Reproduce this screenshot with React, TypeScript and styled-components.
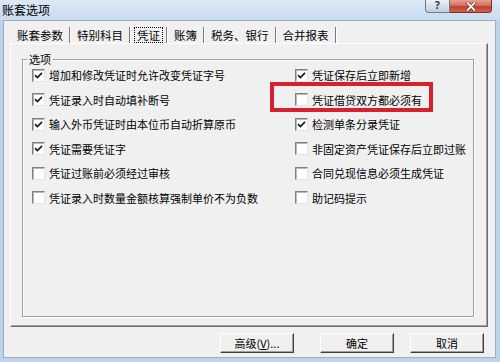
import React from 'react';
import styled, { createGlobalStyle } from 'styled-components';

interface OptionItem {
  label: string;
  checked: boolean;
  highlighted?: boolean;
}

const tabs = ['账套参数', '特别科目', '凭证', '账簿', '税务、银行', '合并报表'];
const activeTab = 2;

// row by row: left column, right column
const optionRows: [OptionItem, OptionItem][] = [
  [
    { label: '增加和修改凭证时允许改变凭证字号', checked: true },
    { label: '凭证保存后立即新增', checked: true },
  ],
  [
    { label: '凭证录入时自动填补断号', checked: true },
    { label: '凭证借贷双方都必须有', checked: false, highlighted: true },
  ],
  [
    { label: '输入外币凭证时由本位币自动折算原币', checked: true },
    { label: '检测单条分录凭证', checked: true },
  ],
  [
    { label: '凭证需要凭证字', checked: true },
    { label: '非固定资产凭证保存后立即过账', checked: false },
  ],
  [
    { label: '凭证过账前必须经过审核', checked: false },
    { label: '合同兑现信息必须生成凭证', checked: false },
  ],
  [
    { label: '凭证录入时数量金额核算强制单价不为负数', checked: false },
    { label: '助记码提示', checked: false },
  ],
];

const GlobalStyle = createGlobalStyle`
  html, body {
    margin: 0;
    padding: 0;
  }
  body {
    width: 500px;
    height: 362px;
    overflow: hidden;
    background: #bcd3eb;
    font-family: "Noto Sans CJK SC", "Noto Sans", "Liberation Sans", sans-serif;
    color: #000;
  }
`;

const Window = styled.div`
  width: 500px;
  height: 362px;
  display: flex;
  flex-direction: column;
  background: #bcd3eb;
  box-sizing: border-box;
`;

const TitleBar = styled.div`
  height: 20px;
  flex: none;
  display: flex;
  align-items: flex-start;
  padding-left: 2px;
  background: linear-gradient(#dce8f5, #c9dbef);
`;

const Title = styled.div`
  font-size: 12px;
  line-height: 20px;
`;

const CaptionButtons = styled.div`
  margin-left: auto;
  margin-right: 8px;
  display: flex;
`;

const CaptionButton = styled.div<{ $close?: boolean }>`
  width: ${p => (p.$close ? 42 : 25)}px;
  height: 13px;
  box-sizing: border-box;
  display: flex;
  align-items: center;
  justify-content: center;
  border: 1px solid ${p => (p.$close ? '#7d2f25' : '#6c7d92')};
  border-top: none;
  border-left-width: ${p => (p.$close ? 0 : 1)}px;
  border-radius: ${p => (p.$close ? '0 0 4px 0' : '0 0 0 4px')};
  background: ${p =>
    p.$close
      ? 'linear-gradient(#e6a193, #d5705f 45%, #c43f2c 55%, #d0624f)'
      : 'linear-gradient(#eef2f7, #d7dfe9 50%, #c3cedb)'};
  font-family: "DejaVu Sans", sans-serif;
  font-weight: bold;
  font-size: 10px;
  line-height: 12px;
  color: #3d4a5c;
`;

const Client = styled.div`
  flex: 1;
  margin: 0 4px 4px 3px;
  border: 1px solid #9aafc6;
  background: #f0f0f0;
  display: flex;
  flex-direction: column;
  padding: 0 7px 0 6px;
  min-height: 0;
`;

const TabStrip = styled.div`
  height: 22px;
  flex: none;
  display: flex;
  align-items: flex-end;
  padding-left: 1px;
`;

const Tab = styled.div<{ $active?: boolean }>`
  height: 16px;
  display: flex;
  align-items: stretch;
  padding: 0 ${p => (p.$active ? 3 : 6)}px;
  margin-right: 1px;
  border-right: 1px solid #7a7a7a;
  box-shadow: 1px 0 0 #ffffff;
  font-size: 11.5px;
  line-height: 16px;
  white-space: nowrap;
`;

const FocusBox = styled.span`
  display: flex;
  align-items: center;
  padding: 0 2px;
  border: 1px dotted #000;
  box-sizing: border-box;
`;

const TabPage = styled.div`
  height: 284px;
  flex: none;
  box-sizing: border-box;
  display: flex;
  padding: 9px 13px 9px 11px;
  border-top: 1px solid #ffffff;
  border-left: 1px solid #ffffff;
  border-right: 1px solid #6b6b6b;
  border-bottom: 1px solid #6b6b6b;
  box-shadow: inset -1px -1px 0 #a0a0a0;
`;

const GroupBox = styled.fieldset`
  flex: 1;
  margin: 0;
  padding: 0 0 0 9px;
  min-width: 0;
  border: 1px solid #a0a0a0;
  box-shadow: 1px 1px 0 #ffffff, inset 1px 1px 0 #ffffff;
`;

const GroupLegend = styled.legend`
  font-size: 11px;
  line-height: 13px;
  padding: 0 2px;
  margin-left: -5px;
  background: #f0f0f0;
`;

const OptionGrid = styled.div`
  display: grid;
  grid-template-columns: 263px 1fr;
  grid-auto-rows: 24.5px;
  align-items: start;
`;

const OptionCell = styled.label`
  position: relative;
  height: 18px;
  display: flex;
  align-items: center;
  gap: 4px;
  font-size: 11px;
  white-space: nowrap;
`;

const Box = styled.span`
  width: 13px;
  height: 13px;
  flex: none;
  box-sizing: border-box;
  background: #ffffff;
  border-top: 1px solid #808080;
  border-left: 1px solid #808080;
  border-right: 1px solid #e3e3e3;
  border-bottom: 1px solid #e3e3e3;
  box-shadow: inset 1px 1px 0 #b8b8b8;
  display: flex;
  align-items: center;
  justify-content: center;
`;

const Highlight = styled.span`
  position: absolute;
  left: -25px;
  top: -8.5px;
  width: 163px;
  height: 30px;
  box-sizing: border-box;
  border: 4px solid #d8212e;
  pointer-events: none;
`;

const ButtonRow = styled.div`
  height: 20px;
  flex: none;
  margin-top: 6px;
  display: flex;
  justify-content: flex-end;
  gap: 16px;
  padding-right: 4px;
`;

const Button = styled.button<{ $spaced?: boolean }>`
  width: 74px;
  height: 20px;
  margin: 0 ${p => (p.$spaced ? 10 : 0)}px 0 0;
  padding: 0;
  box-sizing: border-box;
  background: #f0f0f0;
  border-top: 1px solid #ffffff;
  border-left: 1px solid #ffffff;
  border-right: 1px solid #404040;
  border-bottom: 1px solid #404040;
  box-shadow: inset -1px -1px 0 #a0a0a0;
  font-family: "Noto Sans CJK SC", "Noto Sans", sans-serif;
  font-size: 11px;
  color: #000;
`;

const Mnemonic = styled.span`
  text-decoration: underline;
`;

const CheckMark = () => (
  <svg width="9" height="9" viewBox="0 0 9 9">
    <polyline points="1,4.2 3.4,6.6 8,1.8" fill="none" stroke="#1a1a1a" strokeWidth="1.7" />
  </svg>
);

const CloseGlyph = () => (
  <svg width="12" height="9" viewBox="0 0 12 9">
    <path d="M2.5 1 L9.5 8 M9.5 1 L2.5 8" stroke="#6e2419" strokeWidth="3.2" strokeLinecap="round" />
    <path d="M2.5 1 L9.5 8 M9.5 1 L2.5 8" stroke="#ffffff" strokeWidth="1.8" strokeLinecap="round" />
  </svg>
);

const Option: React.FC<{ item: OptionItem }> = ({ item }) => (
  <OptionCell>
    <Box>{item.checked && <CheckMark />}</Box>
    {item.label}
    {item.highlighted && <Highlight />}
  </OptionCell>
);

export default function App() {
  return (
    <>
      <GlobalStyle />
      <Window>
        <TitleBar>
          <Title>账套选项</Title>
          <CaptionButtons>
            <CaptionButton>?</CaptionButton>
            <CaptionButton $close>
              <CloseGlyph />
            </CaptionButton>
          </CaptionButtons>
        </TitleBar>
        <Client>
          <TabStrip>
            {tabs.map((t, i) => (
              <Tab key={t} $active={i === activeTab}>
                {i === activeTab ? <FocusBox>{t}</FocusBox> : t}
              </Tab>
            ))}
          </TabStrip>
          <TabPage>
            <GroupBox>
              <GroupLegend>选项</GroupLegend>
              <OptionGrid>
                {optionRows.map(([left, right]) => (
                  <React.Fragment key={left.label}>
                    <Option item={left} />
                    <Option item={right} />
                  </React.Fragment>
                ))}
              </OptionGrid>
            </GroupBox>
          </TabPage>
          <ButtonRow>
            <Button $spaced>
              高级(<Mnemonic>V</Mnemonic>)...
            </Button>
            <Button>确定</Button>
            <Button>取消</Button>
          </ButtonRow>
        </Client>
      </Window>
    </>
  );
}
